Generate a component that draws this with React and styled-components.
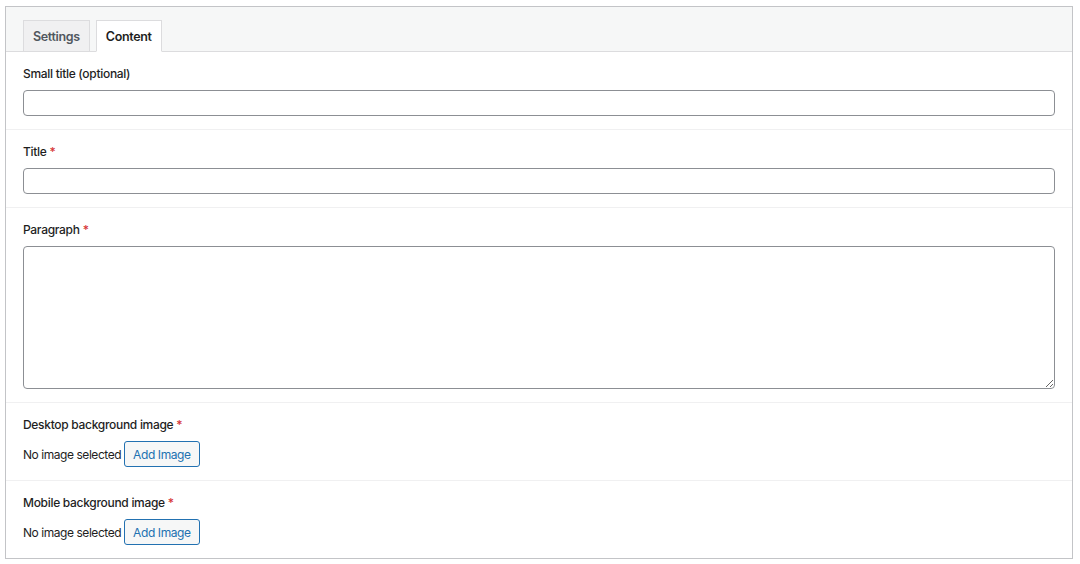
import React from 'react';
import styled, { createGlobalStyle } from 'styled-components';

const GlobalStyle = createGlobalStyle`
  html, body, #root {
    margin: 0;
    padding: 0;
    background: #ffffff;
    font-family: Inter, "Liberation Sans", Arial, sans-serif;
    color: #1e1e1e;
  }
  body {
    padding: 6px 7px 0 5px;
  }
`

const Panel = styled.div`
  border: 1px solid #c3c4c7;
  background: #fff;
`

const TabBar = styled.div`
  display: flex;
  align-items: flex-end;
  gap: 6px;
  padding: 13px 17px 0;
  background: #f6f7f7;
  border-bottom: 1px solid #dcdcde;
  height: 31px;
`

const Tab = styled.button`
  height: 32px;
  margin-bottom: -1px;
  padding: 0 9px;
  font-family: inherit;
  font-size: 12.5px;
  letter-spacing: -0.35px;
  font-weight: 600;
  color: ${p => (p.$active ? '#1e1e1e' : '#50575e')};
  background: ${p => (p.$active ? '#ffffff' : '#f0f0f1')};
  border: 1px solid #dcdcde;
  border-bottom-color: ${p => (p.$active ? '#ffffff' : '#dcdcde')};
  cursor: pointer;
`

const Section = styled.div`
  padding: 13px 17px;
  border-top: ${p => (p.$first ? 'none' : '1px solid #f0f0f1')};
`

const Label = styled.div`
  font-size: 12px;
  letter-spacing: -0.3px;
  line-height: 18px;
  font-weight: 500;
  margin-bottom: 7px;
  color: #1e1e1e;
`

const Required = styled.span`
  color: #d63638;
  margin-left: 3px;
`

const TextInput = styled.input`
  display: block;
  box-sizing: border-box;
  width: 100%;
  height: 26px;
  border: 1px solid #8c8f94;
  border-radius: 4px;
  padding: 0 8px;
  font-family: inherit;
  font-size: 13px;
  background: #fff;
`

const TextArea = styled.textarea`
  display: block;
  box-sizing: border-box;
  width: 100%;
  height: 143px;
  border: 1px solid #8c8f94;
  border-radius: 4px;
  padding: 6px 8px;
  font-family: inherit;
  font-size: 13px;
  background: #fff;
`

const ImageRow = styled.div`
  display: flex;
  align-items: center;
  gap: 3px;
  font-size: 12px;
  letter-spacing: -0.45px;
  color: #1e1e1e;
`

const ImageButton = styled.button`
  height: 26px;
  padding: 0 8px;
  font-family: inherit;
  font-size: 12px;
  letter-spacing: -0.4px;
  color: #2271b1;
  background: #f6f7f7;
  border: 1px solid #2271b1;
  border-radius: 3px;
  cursor: pointer;
`

const Field = ({ label, required, first, children }) => (
  <Section $first={first}>
    <Label>
      {label}
      {required && <Required>*</Required>}
    </Label>
    {children}
  </Section>
)

const ImagePicker = () => (
  <ImageRow>
    <span>No image selected</span>
    <ImageButton type="button">Add Image</ImageButton>
  </ImageRow>
)

export default function App() {
  return (
    <>
      <GlobalStyle />
      <Panel>
        <TabBar>
          <Tab>Settings</Tab>
          <Tab $active>Content</Tab>
        </TabBar>
        <Field label="Small title (optional)" first>
          <TextInput type="text" />
        </Field>
        <Field label="Title" required>
          <TextInput type="text" />
        </Field>
        <Field label="Paragraph" required>
          <TextArea />
        </Field>
        <Field label="Desktop background image" required>
          <ImagePicker />
        </Field>
        <Field label="Mobile background image" required>
          <ImagePicker />
        </Field>
      </Panel>
    </>
  );
}
